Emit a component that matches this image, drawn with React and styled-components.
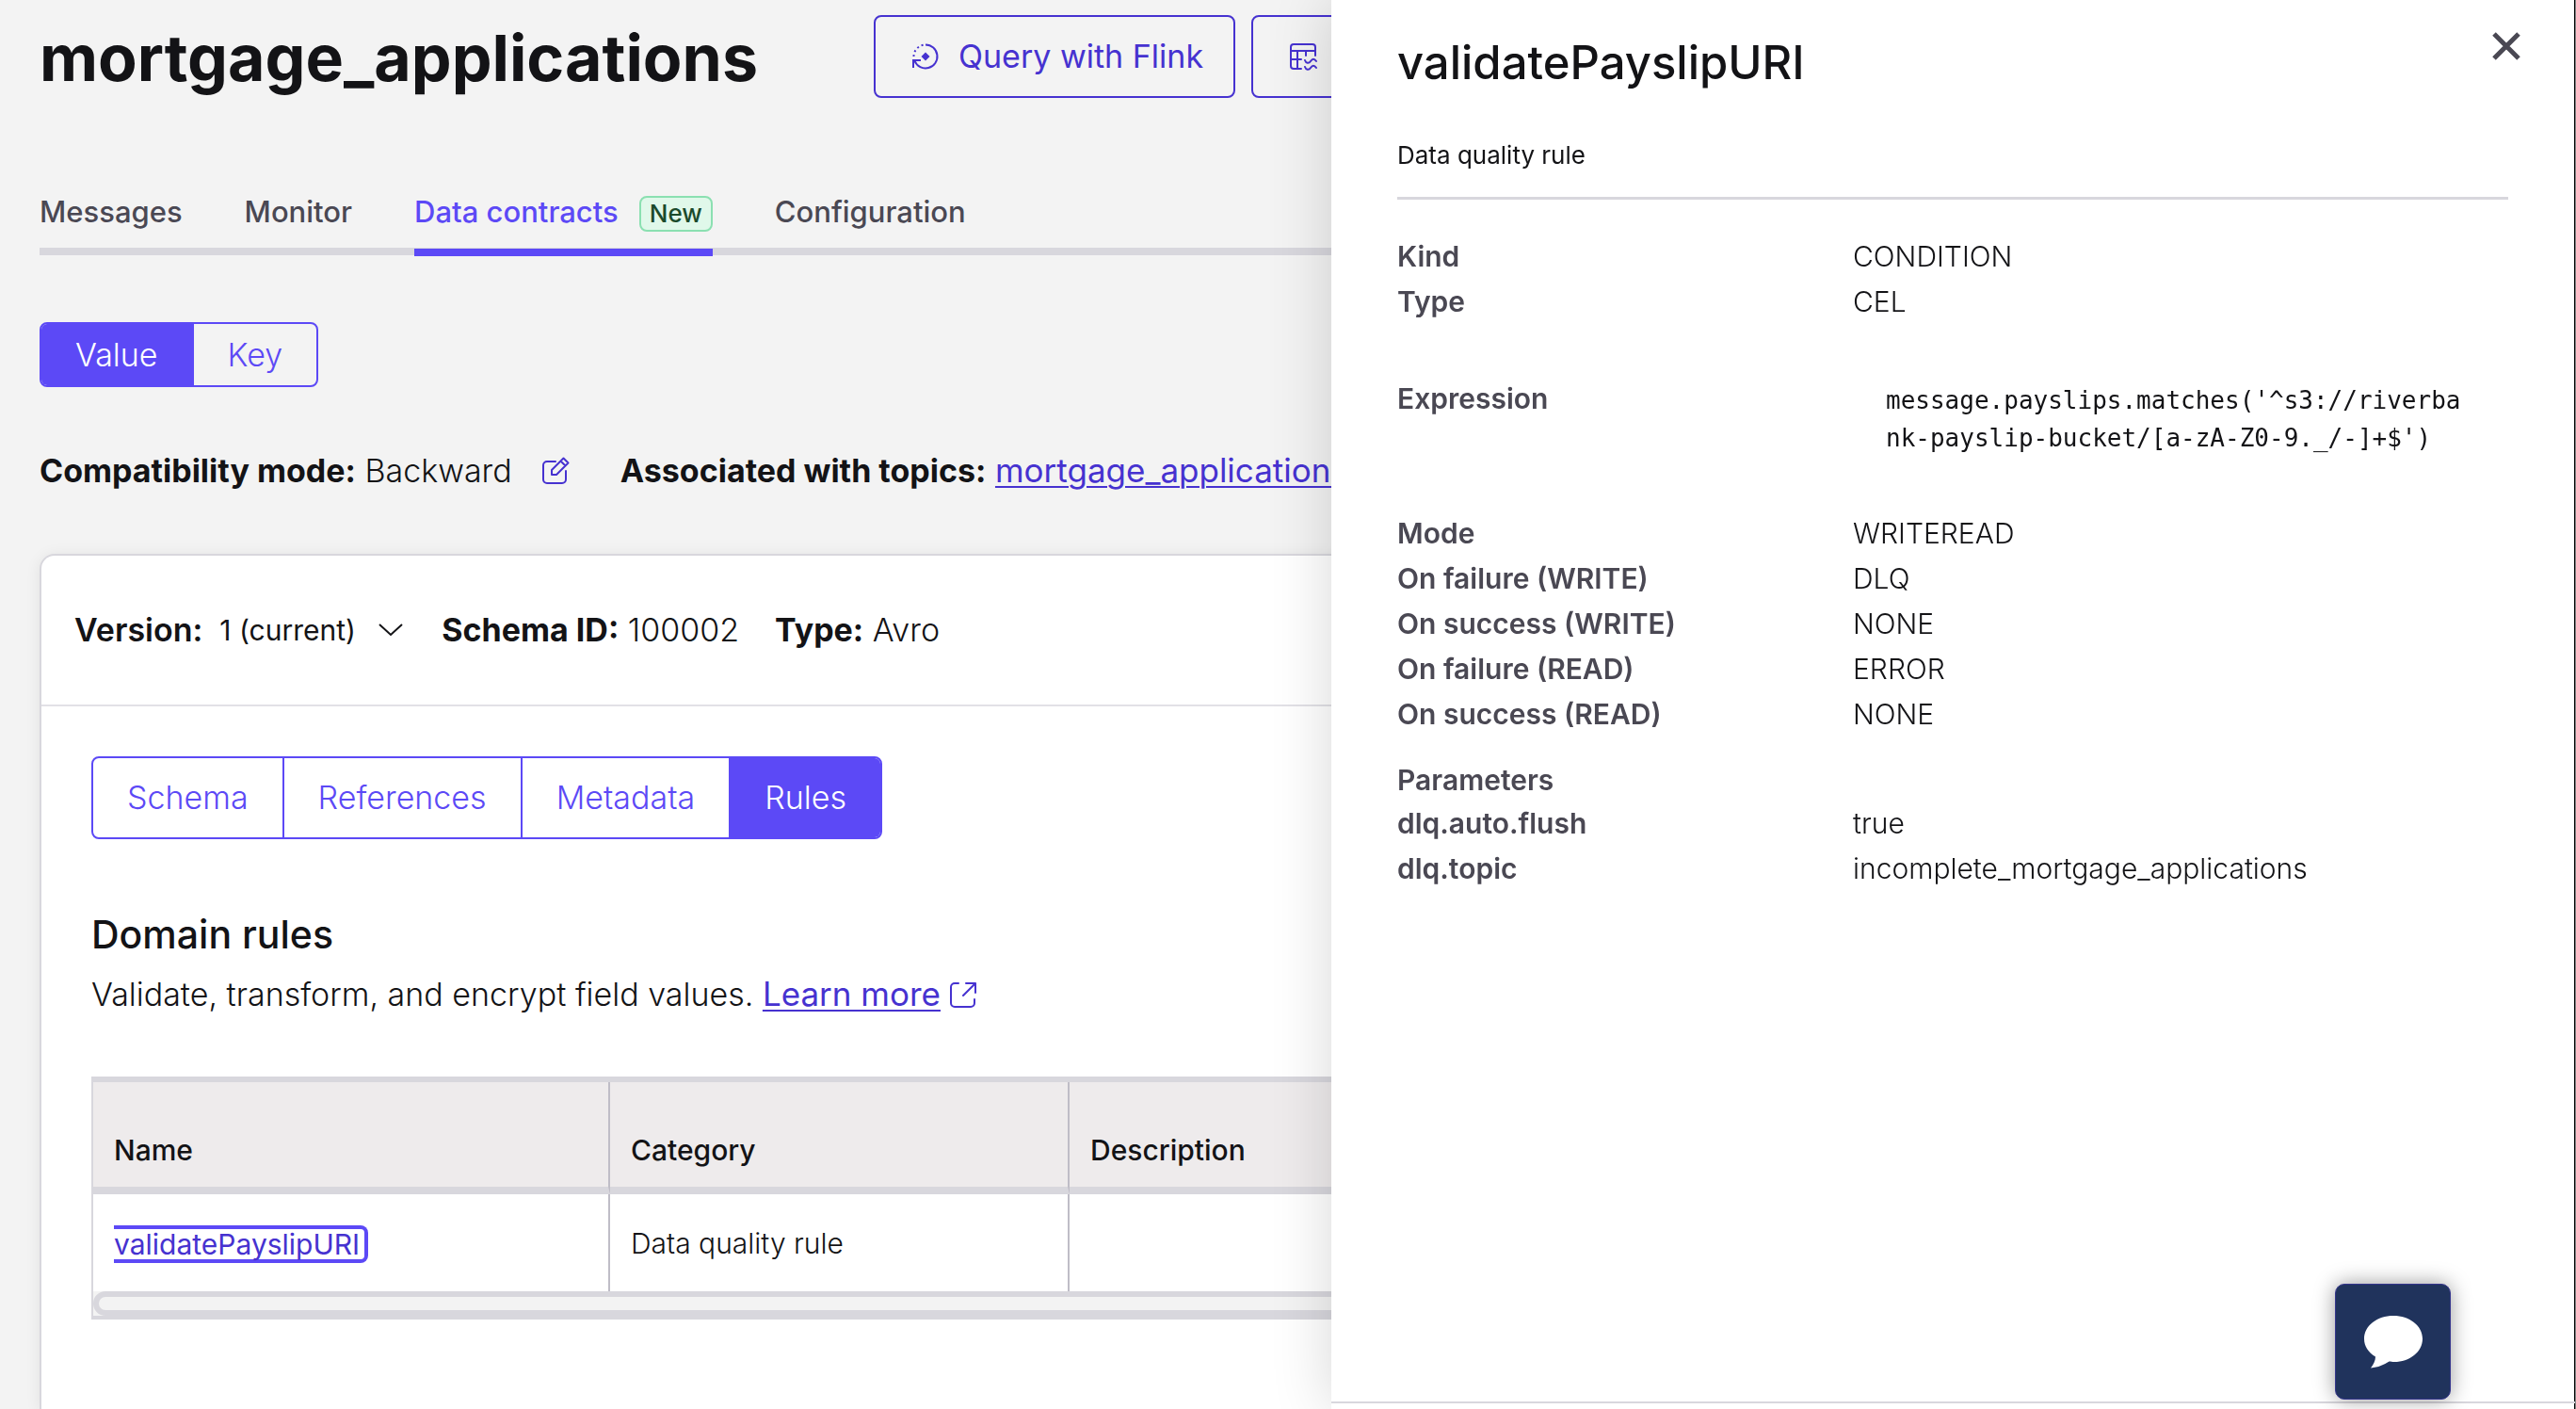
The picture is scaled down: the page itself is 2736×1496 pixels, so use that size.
import React from "react";
import styled, { createGlobalStyle } from "styled-components";

const color = {
  page: "#f3f3f3",
  ink: "#131316",
  muted: "#4a4853",
  line: "#d8d7dd",
  column: "#bfbdc7",
  accent: "#5c49f6",
  link: "#4632d0",
};

const GlobalStyle = createGlobalStyle`
  *, *::before, *::after { box-sizing: border-box; }
  html, body { margin: 0; background: ${color.page}; }
  body {
    color: ${color.ink};
    font-family: Inter, "Liberation Sans", sans-serif;
    font-size: 34px;
    font-weight: 300;
    line-height: 48px;
    overflow: hidden;
  }
  h1, h2, h3, p, dl, dd, dt, pre { margin: 0; }
  button, select { font: inherit; color: inherit; cursor: pointer; }
`;

const Page = styled.main`
  display: flex;
  flex-direction: column;
  height: 100vh;
  padding: 16px 42px 0;
  overflow: hidden;
`;

const Header = styled.header`
  display: flex;
  align-items: center;
  gap: 123px;
`;

const PageTitle = styled.h1`
  padding-top: 2px;
  font-size: 68px;
  font-weight: 700;
  line-height: 80px;
`;

const Actions = styled.div`
  display: flex;
  gap: 17px;
`;

const ActionButton = styled.button`
  display: flex;
  align-items: center;
  gap: 20px;
  min-width: 384px;
  height: 88px;
  padding: 0 32px 0 38px;
  border: 2px solid ${color.link};
  border-radius: 8px;
  background: transparent;
  color: ${color.link};
  font-weight: 400;
  white-space: nowrap;
`;

const TabBar = styled.nav`
  display: flex;
  gap: 66px;
  margin-top: 100px;
  border-bottom: 8px solid ${color.line};
`;

const Tab = styled.a`
  display: flex;
  align-items: center;
  gap: 22px;
  margin-bottom: -9px;
  padding-bottom: 18px;
  border-bottom: 8px solid ${(p) => (p.$active ? color.accent : "transparent")};
  color: ${(p) => (p.$active ? color.accent : color.muted)};
  font-size: 31px;
  font-weight: 500;
  line-height: 40px;
  text-decoration: none;
`;

const Badge = styled.span`
  margin-top: 4px;
  padding: 0 9px;
  border: 2px solid #8be0b1;
  border-radius: 8px;
  background: #e0f8ea;
  color: #1b4a2c;
  font-size: 26px;
  line-height: 34px;
`;

const Segments = styled.div`
  display: flex;
  align-self: flex-start;
  width: max-content;
  margin-top: ${(p) => p.$top}px;
  border: 2px solid ${color.accent};
  border-radius: 8px;
  overflow: hidden;
`;

const Segment = styled.button`
  height: ${(p) => (p.$tall ? 84 : 66)}px;
  padding: 0 36px;
  border: 0;
  background: ${(p) => (p.$active ? color.accent : "transparent")};
  color: ${(p) => (p.$active ? "#fff" : color.accent)};

  & + & {
    border-left: 2px solid ${color.accent};
  }
`;

const Facts = styled.div`
  display: flex;
  align-items: center;
  margin-top: 64px;
  white-space: nowrap;
`;

const Fact = styled.p`
  margin-right: ${(p) => p.$gap || 0}px;

  b { font-weight: 700; }
`;

const TextLink = styled.a`
  color: ${color.link};
  font-size: 35px;
  font-weight: 400;
  text-decoration-thickness: 2px;
  text-underline-offset: 4px;
`;

const IconButton = styled.button`
  display: grid;
  place-items: center;
  padding: 0;
  border: 0;
  background: transparent;
  color: ${(p) => p.$color};
`;

const EditButton = styled(IconButton)`
  width: 32px;
  height: 32px;
  margin-right: 53px;
`;

const Card = styled.section`
  flex: 1 0 auto;
  margin-top: 64px;
  border: 2px solid ${color.line};
  border-bottom: 0;
  border-radius: 16px 16px 0 0;
  background: #fff;
  box-shadow: 0 2px 16px rgba(0, 0, 0, 0.08);
`;

const CardHeader = styled.div`
  display: flex;
  align-items: center;
  height: 160px;
  padding: 0 35px;
  border-bottom: 2px solid #e2e1e6;
  white-space: nowrap;
`;

const VersionLabel = styled.label`
  font-weight: 600;
`;

const VersionField = styled.div`
  display: grid;
  align-items: center;
  width: 196px;
  margin: 0 40px 0 18px;

  > * { grid-area: 1 / 1; }
  > svg { justify-self: end; pointer-events: none; }
`;

const VersionSelect = styled.select`
  appearance: none;
  width: 100%;
  height: 48px;
  padding: 0;
  border: 0;
  background: transparent;
  font-size: 30px;
  font-weight: 400;
  line-height: 48px;
`;

const CardBody = styled.div`
  padding: 0 53px 95px;
  display: flow-root;
`;

const SectionTitle = styled.h2`
  margin-top: 77px;
  font-size: 41px;
  font-weight: 500;
`;

const Intro = styled.p`
  display: flex;
  align-items: center;
  gap: 10px;
  margin-top: 15px;
`;

const TableFrame = styled.div`
  margin-top: 63px;
  border: 2px solid ${color.line};
  border-width: 6px 0 4px 2px;
  background: ${color.page};
  overflow: hidden;
`;

const Table = styled.table`
  width: 100%;
  border-spacing: 0;
  table-layout: fixed;
  background: #fff;
  font-size: 30px;
  line-height: 40px;
  text-align: left;

  th, td {
    padding: 0 22px;
    border-right: 2px solid ${color.column};
  }
  th {
    height: 119px;
    padding-bottom: 19px;
    border-bottom: 8px solid ${color.line};
    background: #eeebec;
    font-weight: 500;
    vertical-align: bottom;
  }
  td { height: 103px; }
  th:last-child, td:last-child { border-right: 0; }
`;

const Column = styled.col`
  width: ${(p) => p.$width};
`;

const RuleLink = styled.a`
  display: inline-block;
  padding-right: 5px;
  border: 4px solid ${color.accent};
  border-left: 0;
  border-radius: 0 8px 8px 0;
  color: ${color.link};
  font-weight: 400;
  line-height: 32px;
  text-decoration: none;
  vertical-align: middle;
`;

const ScrollThumb = styled.div`
  height: 26px;
  border: 6px solid ${color.line};
  border-radius: 13px;
  background: ${color.page};
`;

const Drawer = styled.aside`
  position: fixed;
  inset: 0 0 0 auto;
  display: flex;
  flex-direction: column;
  width: 1322px;
  max-width: 100vw;
  border-right: 1px solid #858585;
  background: #fff;
  box-shadow: 0 0 60px rgba(0, 0, 0, 0.16), inset -1px 0 #000;
`;

const CloseButton = styled(IconButton)`
  position: absolute;
  top: 25px;
  right: 49px;
  width: 48px;
  height: 48px;
`;

const DrawerBody = styled.div`
  flex: 1;
  padding: 37px 71px 0 70px;
`;

const DrawerTitle = styled.h2`
  font-size: 49px;
  font-weight: 500;
  line-height: 60px;
`;

const DrawerSubtitle = styled.p`
  margin-top: 50px;
  padding-bottom: 26px;
  border-bottom: 3px solid ${color.line};
  font-size: 26px;
  font-weight: 400;
  line-height: 36px;
`;

const Details = styled.dl`
  margin-top: ${(p) => p.$top}px;
  font-size: 30px;
`;

const DetailRow = styled.div`
  display: grid;
  grid-template-columns: 484px 1fr;

  dt { color: ${color.muted}; font-weight: 600; }
`;

const Code = styled.code`
  display: block;
  padding: 6px 35px 0;
  font-family: "DejaVu Sans Mono", monospace;
  font-size: 26px;
  font-weight: 400;
  line-height: 40px;
  word-break: break-all;
`;

const GroupTitle = styled.h3`
  margin-top: 24px;
  color: ${color.muted};
  font-size: 30px;
  font-weight: 600;
  line-height: 44px;
`;

const DrawerFooter = styled.footer`
  height: 8px;
  border-top: 2px solid ${color.line};
`;

const ChatButton = styled.button`
  position: fixed;
  right: 133px;
  bottom: 10px;
  display: grid;
  place-items: center;
  width: 123px;
  height: 123px;
  padding: 0;
  border: 1px solid #34348c;
  border-radius: 10px;
  background: #20335c;
  box-shadow: 0 0 22px rgba(0, 0, 0, 0.4);
`;

const FlinkIcon = () => (
  <svg width="30" height="30" viewBox="0 0 30 30" fill="none" stroke="currentColor" strokeWidth="2" aria-hidden="true">
    <path d="M15 2.5a12.5 12.5 0 1 1-11.6 17.2" />
    <path d="M2 27v-8h8" />
    <path d="M2.500 15A12.5 12.5 0 0 1 15 2.500" strokeDasharray="2 3" />
    <path d="M15 10.500l4.500 4.500-4.500 4.500-4.500-4.500z" fill="currentColor" stroke="none" />
  </svg>
);

const TableIcon = () => (
  <svg width="30" height="30" viewBox="0 0 30 30" fill="none" stroke="currentColor" strokeWidth="2" strokeLinecap="round" aria-hidden="true">
    <path d="M13 28H5a3 3 0 0 1-3-3V5a3 3 0 0 1 3-3h20a3 3 0 0 1 3 3v9" />
    <path d="M2 9h26M2 18h11M9 9v19M18 9v5" />
    <path d="M17 19c1 3 4 4 6 1s4-3 6 0M17 26c1 3 4 4 6 1s4-3 6 0" />
  </svg>
);

const EditIcon = () => (
  <svg width="30" height="30" viewBox="0 0 30 30" fill="none" stroke="currentColor" strokeWidth="2" strokeLinejoin="round" strokeLinecap="round" aria-hidden="true">
    <path d="M15 5H6a4 4 0 0 0-4 4v15a4 4 0 0 0 4 4h16a4 4 0 0 0 4-4v-9" />
    <path d="M11 19v-5L23.500 1.500l5 5L16 19zM20.500 4.500l5 5" />
  </svg>
);

const ExternalIcon = () => (
  <svg width="28" height="28" viewBox="0 0 28 28" fill="none" stroke={color.link} strokeWidth="2" strokeLinecap="round" strokeLinejoin="round" aria-hidden="true">
    <path d="M9 2H5a4 4 0 0 0-4 4v17a4 4 0 0 0 4 4h17a4 4 0 0 0 4-4v-4" />
    <path d="M17 2h10v10M27 2L14 15" />
  </svg>
);

const ChevronIcon = () => (
  <svg width="28" height="16" viewBox="0 0 28 16" fill="none" stroke="currentColor" strokeWidth="2" aria-hidden="true">
    <path d="M2 2l12 11L26 2" />
  </svg>
);

const CloseIcon = () => (
  <svg width="30" height="30" viewBox="0 0 30 30" stroke="currentColor" strokeWidth="5" aria-hidden="true">
    <path d="M2 2l26 26M28 2L2 28" />
  </svg>
);

const ChatIcon = () => (
  <svg width="62" height="56" viewBox="0 0 62 56" fill="#fff" aria-hidden="true">
    <path d="M31 0C48 0 62 10.500 62 24.500S48 49 32 49c-2 0-4 0-5.500-.4C21 52 15 55 7 55.500c3-4 5-8 5-12C4.500 39 0 32.500 0 24.500 0 10.500 14 0 31 0z" />
  </svg>
);

const tabs = [
  { label: "Messages" },
  { label: "Monitor" },
  { label: "Data contracts", active: true, badge: "New" },
  { label: "Configuration" },
];

const summary = [
  ["Kind", "CONDITION"],
  ["Type", "CEL"],
];

const behaviour = [
  ["Mode", "WRITEREAD"],
  ["On failure (WRITE)", "DLQ"],
  ["On success (WRITE)", "NONE"],
  ["On failure (READ)", "ERROR"],
  ["On success (READ)", "NONE"],
];

const parameters = [
  ["dlq.auto.flush", "true"],
  ["dlq.topic", "incomplete_mortgage_applications"],
];

function DetailList({ items, top = 0 }) {
  return (
    <Details $top={top}>
      {items.map(([name, value]) => (
        <DetailRow key={name}>
          <dt>{name}</dt>
          <dd>{value}</dd>
        </DetailRow>
      ))}
    </Details>
  );
}

function SegmentGroup({ options, active, tall, top, label }) {
  return (
    <Segments $top={top} role="group" aria-label={label}>
      {options.map((option) => (
        <Segment key={option} type="button" $tall={tall} $active={option === active} aria-pressed={option === active}>
          {option}
        </Segment>
      ))}
    </Segments>
  );
}

export default function App() {
  return (
    <>
      <GlobalStyle />
      <Page>
        <Header>
          <PageTitle>mortgage_applications</PageTitle>
          <Actions>
            <ActionButton type="button">
              <FlinkIcon />
              Query with Flink
            </ActionButton>
            <ActionButton type="button" aria-label="Open table">
              <TableIcon />
            </ActionButton>
          </Actions>
        </Header>

        <TabBar>
          {tabs.map((tab) => (
            <Tab key={tab.label} href="#" $active={tab.active}>
              {tab.label}
              {tab.badge && <Badge>{tab.badge}</Badge>}
            </Tab>
          ))}
        </TabBar>

        <SegmentGroup label="Schema subject" options={["Value", "Key"]} active="Value" top={71} />

        <Facts>
          <Fact $gap={30}>
            <b>Compatibility mode:</b> Backward
          </Fact>
          <EditButton type="button" $color={color.link} aria-label="Edit compatibility mode">
            <EditIcon />
          </EditButton>
          <Fact>
            <b>Associated with topics:</b> <TextLink href="#">mortgage_applications</TextLink>
          </Fact>
        </Facts>

        <Card>
          <CardHeader>
            <VersionLabel htmlFor="version">Version:</VersionLabel>
            <VersionField>
              <VersionSelect id="version" defaultValue="1">
                <option value="1">1 (current)</option>
              </VersionSelect>
              <ChevronIcon />
            </VersionField>
            <Fact $gap={38}>
              <b>Schema ID:</b> 100002
            </Fact>
            <Fact>
              <b>Type:</b> Avro
            </Fact>
          </CardHeader>
          <CardBody>
            <SegmentGroup
              label="Schema section"
              options={["Schema", "References", "Metadata", "Rules"]}
              active="Rules"
              tall
              top={53}
            />
            <SectionTitle>Domain rules</SectionTitle>
            <Intro>
              <span>
                Validate, transform, and encrypt field values. <TextLink href="#">Learn more</TextLink>
              </span>
              <ExternalIcon />
            </Intro>
            <TableFrame>
              <Table>
                <colgroup>
                  <Column $width="549px" />
                  <Column $width="488px" />
                  <Column $width="auto" />
                </colgroup>
                <thead>
                  <tr>
                    <th>Name</th>
                    <th>Category</th>
                    <th>Description</th>
                  </tr>
                </thead>
                <tbody>
                  <tr>
                    <td>
                      <RuleLink href="#">validatePayslipURI</RuleLink>
                    </td>
                    <td>Data quality rule</td>
                    <td />
                  </tr>
                </tbody>
              </Table>
              <ScrollThumb />
            </TableFrame>
          </CardBody>
        </Card>
      </Page>

      <Drawer aria-label="Rule details">
        <CloseButton type="button" $color={color.muted} aria-label="Close">
          <CloseIcon />
        </CloseButton>
        <DrawerBody>
          <DrawerTitle>validatePayslipURI</DrawerTitle>
          <DrawerSubtitle>Data quality rule</DrawerSubtitle>
          <DetailList items={summary} top={36} />
          <Details $top={55}>
            <DetailRow>
              <dt>Expression</dt>
              <dd>
                <Code>message.payslips.matches('^s3://riverbank-payslip-bucket/[a-zA-Z0-9._/-]+$')</Code>
              </dd>
            </DetailRow>
          </Details>
          <DetailList items={behaviour} top={57} />
          <GroupTitle>Parameters</GroupTitle>
          <DetailList items={parameters} />
        </DrawerBody>
        <DrawerFooter />
      </Drawer>

      <ChatButton type="button" aria-label="Open chat">
        <ChatIcon />
      </ChatButton>
    </>
  );
}
